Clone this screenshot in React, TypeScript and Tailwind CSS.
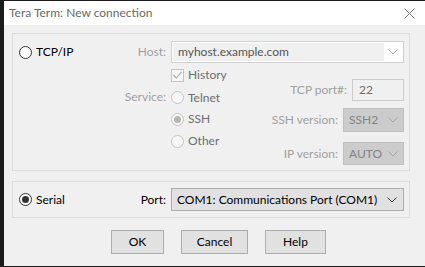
import React from "react";

const font = "font-['Segoe_UI','Lato',sans-serif]";

function Chevron({ color }: { color: string }) {
  return (
    <svg width="10" height="6" viewBox="0 0 10 6" className="shrink-0">
      <polyline points="0.5,0.5 5,5 9.5,0.5" fill="none" stroke={color} strokeWidth="1" />
    </svg>
  );
}

function Radio({
  checked,
  disabled,
  label,
}: {
  checked?: boolean;
  disabled?: boolean;
  label: string;
}) {
  return (
    <span className="flex items-center">
      <span
        className={
          "flex h-[13px] w-[13px] items-center justify-center rounded-full border " +
          (disabled ? "border-[#c4c4c4] bg-[#f7f7f7]" : "border-[#333333] bg-white")
        }
      >
        {checked && (
          <span
            className={
              "h-[7px] w-[7px] rounded-full " + (disabled ? "bg-[#b5b5b5]" : "bg-[#333333]")
            }
          />
        )}
      </span>
      <span className={"ml-[4px] " + (disabled ? "text-[#6d6d6d]" : "text-black")}>{label}</span>
    </span>
  );
}

function GrayCombo({ value }: { value: string }) {
  return (
    <div className="flex h-full w-[61px] items-center justify-between border border-[#bfbfbf] bg-[#cccccc] pl-[5px] pr-[5px] text-[#838383]">
      <span>{value}</span>
      <Chevron color="#a8a8a8" />
    </div>
  );
}

export default function App() {
  return (
    <div
      className={
        "h-[267px] w-[425px] overflow-hidden whitespace-nowrap bg-[#1b1b1b] pl-[4px] pt-[1px] text-[12px] " + font
      }
    >
      <div className="flex h-[265px] w-[421px] flex-col">
        {/* title bar */}
        <div className="flex h-[24px] shrink-0 items-center justify-between bg-white pl-[5px] pr-[10px]">
          <span className="text-[#6a6a6a]">Tera Term: New connection</span>
          <svg width="11" height="11" viewBox="0 0 11 11">
            <path d="M0.5 0.5 L10.5 10.5 M10.5 0.5 L0.5 10.5" stroke="#7a7a7a" strokeWidth="1" />
          </svg>
        </div>

        <div className="flex-1 bg-[#f0f0f0] pl-[8px] pt-[8px]">
          {/* TCP/IP group */}
          <div className="h-[138px] w-[398px] border border-[#dcdcdc] pl-[6px] pr-[5px] pt-[7px]">
            <div className="flex h-[22px] items-center">
              <div className="flex w-[147px] items-center justify-between">
                <Radio label="TCP/IP" />
                <span className="text-[#a0a0a0]">Host:</span>
              </div>
              <div className="ml-[5px] flex h-full w-[233px] border border-[#d0d0d0] bg-white p-[1px]">
                <span className="flex flex-1 items-center bg-[#f0f0f0] pl-[5px] text-[#555555]">
                  myhost.example.com
                </span>
                <span className="flex w-[18px] items-center justify-center">
                  <Chevron color="#b8b8b8" />
                </span>
              </div>
            </div>

            <div className="mt-[1px] flex">
              <div className="w-[147px]">
                <div className="mt-[22px] flex h-[22px] items-center justify-end text-[#a0a0a0]">
                  Service:
                </div>
              </div>

              <div className="ml-[5px] flex w-[100px] flex-col">
                <div className="flex h-[22px] items-center">
                  <span className="flex h-[13px] w-[13px] items-center justify-center border border-[#c4c4c4] bg-[#f7f7f7]">
                    <svg width="9" height="8" viewBox="0 0 9 8">
                      <polyline points="0.5,4 3.3,7 8.5,0.8" fill="none" stroke="#a8a8a8" strokeWidth="1.1" />
                    </svg>
                  </span>
                  <span className="ml-[4px] text-[#6d6d6d]">History</span>
                </div>
                <div className="flex h-[22px] items-center pt-[1px]">
                  <Radio disabled label="Telnet" />
                </div>
                <div className="flex h-[22px] items-center">
                  <Radio disabled checked label="SSH" />
                </div>
                <div className="flex h-[22px] items-center">
                  <Radio disabled label="Other" />
                </div>
              </div>

              <div className="flex flex-1 flex-col items-end">
                <div className="mt-[15px] flex h-[22px] items-center gap-[5px]">
                  <span className="text-[#a0a0a0]">TCP port#:</span>
                  <div className="flex h-full w-[52px] items-center border border-[#cccccc] bg-[#f0f0f0] pl-[6px] text-[#6d6d6d]">
                    22
                  </div>
                </div>
                <div className="mt-[7px] flex h-[24px] items-center gap-[5px]">
                  <span className="text-[#a0a0a0]">SSH version:</span>
                  <GrayCombo value="SSH2" />
                </div>
                <div className="mt-[10px] flex h-[23px] items-center gap-[5px]">
                  <span className="text-[#a0a0a0]">IP version:</span>
                  <GrayCombo value="AUTO" />
                </div>
              </div>
            </div>
          </div>

          {/* Serial group */}
          <div className="mt-[10px] h-[37px] w-[398px] border border-[#dcdcdc] pl-[6px] pr-[5px] pt-[6px]">
            <div className="flex h-[23px] items-center">
              <div className="flex w-[147px] items-center justify-between">
                <Radio checked label="Serial" />
                <span className="text-black">Port:</span>
              </div>
              <div className="ml-[5px] flex h-full w-[233px] items-center justify-between border border-[#adadad] bg-[#e1e1e1] pl-[5px] pr-[6px] text-black">
                <span>COM1: Communications Port (COM1)</span>
                <Chevron color="#333333" />
              </div>
            </div>
          </div>

          {/* buttons */}
          <div className="ml-[99px] mt-[12px] flex gap-[17px]">
            <button className="h-[24px] w-[53px] border border-[#adadad] bg-[#e1e1e1] text-black">OK</button>
            <button className="h-[24px] w-[67px] border border-[#adadad] bg-[#e1e1e1] text-black">Cancel</button>
            <button className="h-[24px] w-[61px] border border-[#adadad] bg-[#e1e1e1] text-black">Help</button>
          </div>
        </div>
      </div>
    </div>
  );
}
